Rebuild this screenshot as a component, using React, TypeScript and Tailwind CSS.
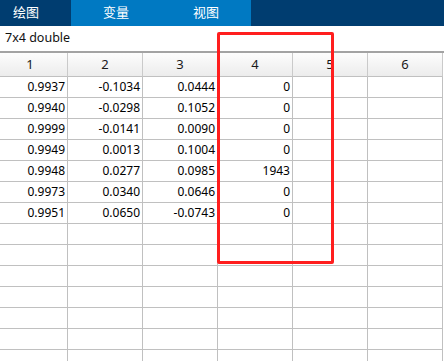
import React from 'react';

const tabs = [
  { id: 'plot', label: '绘图', active: false },
  { id: 'var', label: '变量', active: true },
  { id: 'view', label: '视图', active: true },
];

const rows: string[][] = [
  ['0.9937', '-0.1034', '0.0444', '0'],
  ['0.9940', '-0.0298', '0.1052', '0'],
  ['0.9999', '-0.0141', '0.0090', '0'],
  ['0.9949', '0.0013', '0.1004', '0'],
  ['0.9948', '0.0277', '0.0985', '1943'],
  ['0.9973', '0.0340', '0.0646', '0'],
  ['0.9951', '0.0650', '-0.0743', '0'],
];

const TOTAL_ROWS = 14;
const COLS = [1, 2, 3, 4, 5, 6];

const App: React.FC = () => {
  const body = Array.from({ length: TOTAL_ROWS }, (_, i) => rows[i] ?? []);

  return (
    <div
      className="relative w-[444px] h-[361px] overflow-hidden bg-white text-black"
      style={{ fontFamily: '"Noto Sans", "Noto Sans CJK SC", sans-serif' }}
    >
      {/* Tab strip */}
      <div className="flex h-[26px] bg-[#003d70] -ml-[19px]">
        {tabs.map((tab) => (
          <div
            key={tab.id}
            className={`w-[90px] flex items-center justify-center text-[13px] text-white ${
              tab.active ? 'bg-[#0079c2]' : 'bg-[#003d70]'
            }`}
          >
            {tab.label}
          </div>
        ))}
      </div>

      {/* Variable size label */}
      <div className="h-[25px] flex items-center pl-[5px] text-[12.5px] text-[#111]">7x4 double</div>

      {/* Table */}
      <div className="border-t-2 border-[#a3a3a3] overflow-hidden">
        <div className="-ml-[7px] w-[450px]">
          <div className="flex">
            {COLS.map((c) => (
              <div
                key={c}
                className="w-[75px] h-[24px] border-r border-b border-r-[#cacaca] border-b-[#c0c0c0] bg-gradient-to-b from-[#fdfdfd] to-[#ececec] flex items-center justify-center text-[13px] text-[#1a1a1a]"
              >
                {c}
              </div>
            ))}
          </div>
          {body.map((row, i) => (
            <div key={i} className="flex">
              {COLS.map((c, j) => (
                <div
                  key={c}
                  className="w-[75px] h-[21px] border-r border-b border-[#c0c0c0] flex items-center justify-end pr-[2px] text-[12px] leading-none"
                >
                  {row[j] ?? ''}
                </div>
              ))}
            </div>
          ))}
        </div>
      </div>

      {/* Red highlight annotation */}
      <div className="absolute left-[217px] top-[32px] w-[117px] h-[232px] border-[3px] border-[#ff1e1e] rounded-[2px] pointer-events-none" />
    </div>
  );
};

export default App;
